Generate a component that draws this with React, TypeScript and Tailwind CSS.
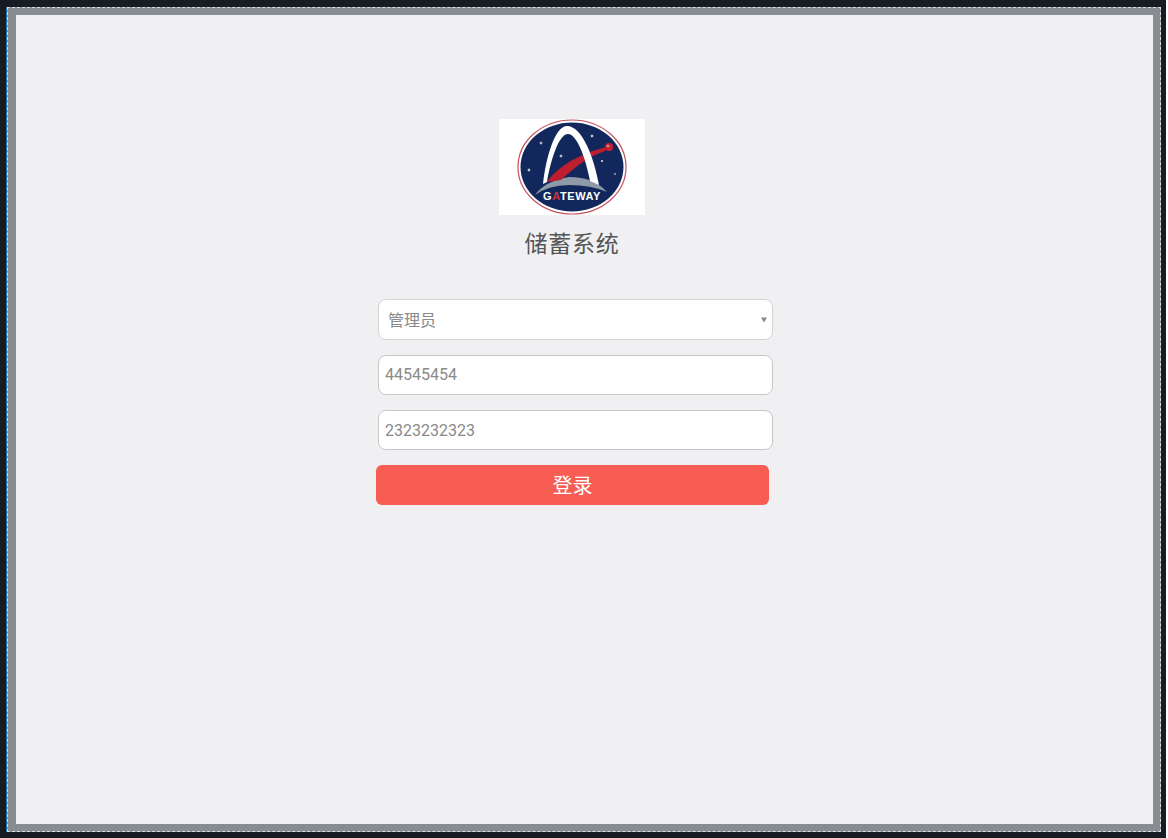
function GatewayLogo() {
  return (
    <div className="relative h-[96px] w-[146px] bg-white">
      <svg viewBox="0 0 146 96" className="h-full w-full">
        <ellipse cx="73" cy="48" rx="54" ry="47" fill="#fff" stroke="#c4505e" strokeWidth="1.2" />
        <ellipse cx="73" cy="48" rx="51.5" ry="44.5" fill="#12285c" />
        <path d="M36 76 Q 46 62 70 58 Q 95 58 108 73 Q 92 66 70 66 Q 50 66 36 76 Z" fill="#8f9aa8" />
        <path d="M48 63 C 58 48 80 35 107 28 L 106 32 C 90 37 76 48 62 61 Z" fill="#bf1e2e" />
        <path d="M44 65 C 47 38 56 7 68 7 C 83 7 95 38 100 66 L 91 62 C 87 40 78 15 69 15 C 60 15 52 40 48 63 Z" fill="#fff" />
        <circle cx="110" cy="28" r="4" fill="#c8202f" />
        <circle cx="109" cy="27" r="1.3" fill="#e98a8a" />
        <g fill="#fff">
          <path d="M42 22 L42.5 23.5 L44 24 L42.5 24.5 L42 26 L41.5 24.5 L40 24 L41.5 23.5 Z" />
          <path d="M62 35 L62.5 36.5 L64 37 L62.5 37.5 L62 39 L61.5 37.5 L60 37 L61.5 36.5 Z" />
          <path d="M30 49 L30.6 50.4 L32 51 L30.6 51.6 L30 53 L29.4 51.6 L28 51 L29.4 50.4 Z" />
          <path d="M93 15 L93.6 16.4 L95 17 L93.6 17.6 L93 19 L92.4 17.6 L91 17 L92.4 16.4 Z" />
          <circle cx="103" cy="42" r="0.9" />
          <circle cx="116" cy="55" r="0.8" />
        </g>
      </svg>
      <span className="absolute left-0 right-0 top-[70px] text-center font-['Liberation_Sans',sans-serif] text-[11px] leading-[14px] font-bold tracking-[0.6px] text-white">
        G<span className="text-[#d4303e]">A</span>TEWAY
      </span>
    </div>
  )
}

export default function App() {
  return (
    <div className="h-[838px] w-[1168px] bg-white font-['Roboto','Noto_Sans_CJK_SC',sans-serif]">
      <div className="h-full w-[1166px] bg-[#161c22] pl-[6px] pr-[5px] pt-[7px] pb-[6px]">
        <div className="h-full w-full border-l border-[#1f6fb5]">
          <div className="h-full w-full border border-dashed border-[#d8dcdf] bg-[#868c90] py-[7px] pr-[7px] pl-[8px]">
            <div className="flex h-full w-full flex-col items-center bg-[#f0f0f2] pt-[104px] pr-[25px]">
              <GatewayLogo />
              <h1 className="mt-[14px] text-[23px] leading-[32px] tracking-[0.8px] font-normal text-[#555555]">储蓄系统</h1>
              <form className="mt-[38px] ml-[7px] flex w-[395px] flex-col">
                <div className="relative flex h-[41px] items-center rounded-[8px] border border-[#d4d4d6] bg-white pt-[3px] pl-[9px] text-[16px] text-[#8a8a8a]">
                  管理员
                  <svg viewBox="0 0 6 6" className="absolute right-[5px] top-[17px] h-[6px] w-[6px]">
                    <path d="M0 0.5 H6 L3 5.5 Z" fill="#888888" />
                  </svg>
                </div>
                <input
                  readOnly
                  value="44545454"
                  className="mt-[15px] h-[40px] rounded-[8px] border border-[#c8c8ca] bg-white px-[6px] pb-[2px] text-[16px] text-[#8a8a8a] outline-none"
                />
                <input
                  readOnly
                  value="2323232323"
                  className="mt-[15px] h-[40px] rounded-[8px] border border-[#c8c8ca] bg-white px-[6px] text-[16px] text-[#8a8a8a] outline-none"
                />
                <button
                  type="button"
                  className="mt-[15px] ml-[-2px] h-[40px] w-[393px] rounded-[6px] bg-[#f85d54] pt-[1px] text-[20px] text-white"
                >
                  登录
                </button>
              </form>
            </div>
          </div>
        </div>
      </div>
    </div>
  )
}
